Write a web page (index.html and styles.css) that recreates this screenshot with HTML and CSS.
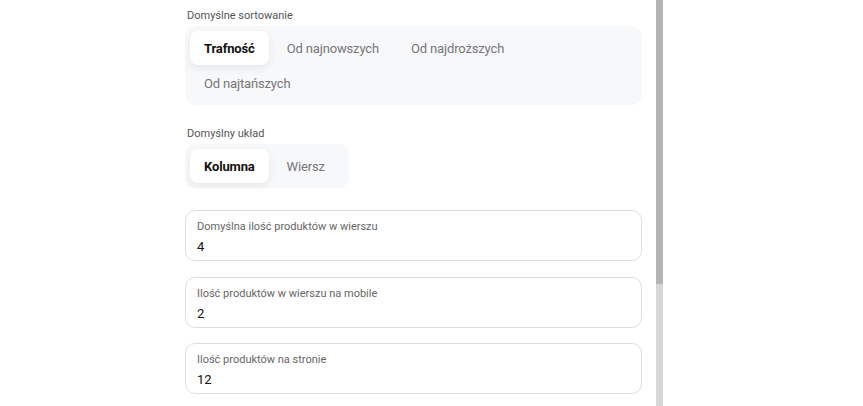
FILE: index.html
```html
<!doctype html>
<html>
<head>
    <meta charset="utf-8" />
    <title>Ustawienia listy produktów</title>
    <link rel="stylesheet" href="styles.css">
</head>
<body>
<div class="page">
    <div class="settings">
        <div class="field">
            <p class="field-label">Domyślne sortowanie</p>
            <div class="segmented segmented-wide">
                <button class="seg active">Trafność</button>
                <button class="seg">Od najnowszych</button>
                <button class="seg">Od najdroższych</button>
                <button class="seg">Od najtańszych</button>
            </div>
        </div>
        <div class="field">
            <p class="field-label">Domyślny układ</p>
            <div class="segmented">
                <button class="seg active">Kolumna</button>
                <button class="seg">Wiersz</button>
            </div>
        </div>
        <div class="inputs">
            <label class="input-box">
                <span class="input-label">Domyślna ilość produktów w wierszu</span>
                <span class="input-value">4</span>
            </label>
            <label class="input-box">
                <span class="input-label">Ilość produktów w wierszu na mobile</span>
                <span class="input-value">2</span>
            </label>
            <label class="input-box">
                <span class="input-label">Ilość produktów na stronie</span>
                <span class="input-value">12</span>
            </label>
        </div>
    </div>
    <div class="scrollbar">
        <div class="thumb"></div>
    </div>
</div>
</body>
</html>
```

FILE: styles.css
```css
*{
    margin:0px;
    padding:0px;
    box-sizing:border-box;
    font-family:Roboto,'Noto Sans',sans-serif;
}
html,body{
    width:100%;
    height:100%;
    background-color:#fff;
    overflow:hidden;
}
.page{
    display:flex;
    height:406px;
    padding-left:185px;
}
.settings{
    width:457px;
    padding-top:9px;
    display:flex;
    flex-direction:column;
}
.scrollbar{
    width:7px;
    height:100%;
    margin-left:14px;
    background-color:#d6d6d6;
}
.thumb{
    height:284px;
    background-color:#b4b4b4;
}
.field{
    margin-bottom:22px;
}
.field-label{
    margin-left:2px;
    margin-bottom:3px;
    font-size:11px;
    line-height:14px;
    color:#555;
}
.segmented{
    display:inline-flex;
    flex-wrap:wrap;
    column-gap:4px;
    row-gap:1px;
    padding:5px 10px 5px 5px;
    border-radius:10px;
    background-color:#f7f8fa;
}
.segmented-wide{
    display:flex;
}
.seg{
    height:34px;
    padding:0px 14px;
    border:none;
    border-radius:8px;
    background:none;
    font-size:13px;
    letter-spacing:-0.15px;
    color:#777;
    cursor:pointer;
}
.seg.active{
    background-color:#fff;
    color:#111;
    font-weight:bold;
    box-shadow:0px 3px 8px rgba(0,0,0,.07);
}
.inputs{
    display:flex;
    flex-direction:column;
    gap:15.5px;
}
.input-box{
    display:flex;
    flex-direction:column;
    height:51px;
    padding:8px 10px 0px 11px;
    border:1px solid #dedede;
    border-radius:10px;
}
.input-label{
    font-size:11px;
    line-height:16px;
    color:#666;
}
.input-value{
    margin-top:4px;
    font-size:13px;
    line-height:16px;
    color:#111;
}
```
